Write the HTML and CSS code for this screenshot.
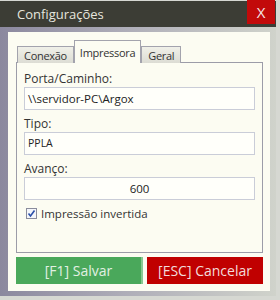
FILE: index.html
```html
<!DOCTYPE html>
<html lang="pt">
<head>
    <meta charset="UTF-8">
    <meta name="viewport" content="width=device-width, initial-scale=1.0">
    <title>Configurações</title>
    <link rel="stylesheet" href="styles.css">
</head>
<body>
    <div class="window">
        <div class="titlebar">
            <span class="title">Configurações</span>
            <span class="close">X</span>
        </div>
        <div class="frame">
            <div class="dialog">
                <div class="tabs">
                    <div class="tab">Conexão</div>
                    <div class="tab active">Impressora</div>
                    <div class="tab">Geral</div>
                </div>
                <div class="panel">
                    <div class="field-label">Porta/Caminho:</div>
                    <div class="input">\\servidor-PC\Argox</div>

                    <div class="field-label">Tipo:</div>
                    <div class="input small">PPLA</div>

                    <div class="field-label">Avanço:</div>
                    <div class="input center">600</div>

                    <div class="check">
                        <span class="box">
                            <svg width="9" height="9" viewBox="0 0 9 9">
                                <path d="M1.5 4.5 L3.5 7 L7.5 1.5" fill="none" stroke="#2a4fa8" stroke-width="1.6"/>
                            </svg>
                        </span>
                        Impressão invertida
                    </div>
                </div>
                <div class="actions">
                    <button class="btn save">[F1] Salvar</button>
                    <button class="btn cancel">[ESC] Cancelar</button>
                </div>
            </div>
        </div>
    </div>
</body>
</html>
```

FILE: styles.css
```css
body {
    margin: 0;
    background: #d6d8d2;
    font-family: "Open Sans", "Noto Sans", sans-serif;
    color: #2b2b2b;
}

.window {
    width: 276px;
    margin-top: 1px;
}

.titlebar {
    display: flex;
    height: 26px;
    background: #3c3d35;
    color: #e6e6de;
}

.title {
    flex: 1;
    padding-left: 17px;
    font-size: 13px;
    line-height: 26px;
}

.close {
    width: 28px;
    height: 24px;
    margin-top: -1px;
    margin-right: 1px;
    background: #c20a0a;
    color: #f4e8e8;
    font-size: 15px;
    line-height: 24px;
    text-align: center;
}

.frame {
    padding: 5px 6px 5px 8px;
    background: linear-gradient(to right, #8b889e, #aeadb8 45%, #d0d3cb);
}

.dialog {
    display: flex;
    flex-direction: column;
    height: 244px;
    padding: 8px 7px 7px 8px;
    background: #fcfcf2;
}

.tabs {
    display: flex;
    align-items: flex-end;
    height: 23px;
    margin-left: 1px;
    margin-bottom: -1px;
    position: relative;
    z-index: 1;
}

.tab {
    height: 16px;
    padding: 0 6px;
    border: 1px solid #a3a3ad;
    border-bottom: none;
    background: linear-gradient(#f0f0e8, #dcdcd4);
    font-size: 11px;
    letter-spacing: -0.3px;
    line-height: 17px;
    color: #333;
}

.tab.active {
    height: 22px;
    padding: 0 5px;
    background: #fcfcf2;
    line-height: 24px;
}

.panel {
    flex: 1;
    padding: 7px 7px 0 7px;
    border: 1px solid #9c9ca8;
}

.field-label {
    height: 17px;
    font-size: 12px;
    line-height: 18px;
    color: #333;
}

.input {
    height: 21px;
    margin-bottom: 5px;
    padding: 0 3px;
    border: 1px solid #cacdd8;
    background: #fffffa;
    font-size: 11.5px;
    line-height: 21px;
    color: #222;
}

.input.small {
    font-size: 10.5px;
}

.input.center {
    text-align: center;
}

.check {
    display: flex;
    align-items: center;
    gap: 4px;
    height: 16px;
    margin-top: 4px;
    padding-left: 2px;
    font-size: 11.5px;
    color: #333;
}

.box {
    display: flex;
    align-items: center;
    justify-content: center;
    width: 9px;
    height: 9px;
    border: 1px solid #8a8c9c;
    background: #f4f6fa;
}

.actions {
    display: flex;
    gap: 4px;
    margin-top: 4px;
    height: 27px;
}

.btn {
    border: none;
    font-family: "Open Sans", "Noto Sans", sans-serif;
    font-size: 14px;
    padding: 0;
}

.save {
    width: 127px;
    background: #4aa85b;
    border-right: 2px solid #88c892;
    color: #e2f0e3;
}

.cancel {
    flex: 1;
    background: #c00000;
    color: #f2dcdc;
}
```
